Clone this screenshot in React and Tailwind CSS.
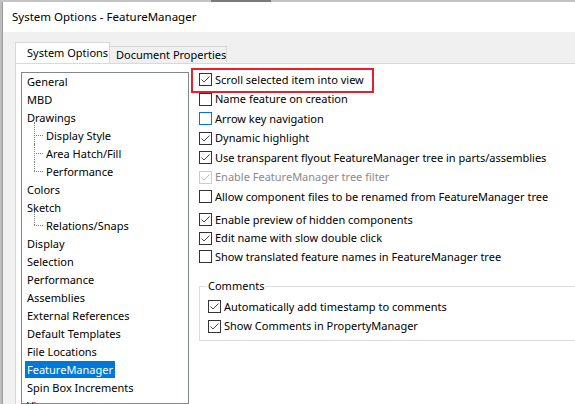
import React from "react";

const FONT = { fontFamily: '"Noto Sans", "Open Sans", Arial, sans-serif' };

function Check({ checked, disabled, focus }) {
  const border = disabled ? "border-[#cccccc]" : focus ? "border-[#0078d7]" : "border-[#333333]";
  return (
    <span className={`w-[13px] h-[13px] border ${border} bg-white flex items-center justify-center shrink-0`}>
      {checked && (
        <svg width="11" height="11" viewBox="0 0 11 11">
          <path d="M1.5 5.5 L4 8 L9.5 2.5" fill="none" stroke={disabled ? "#bcbcbc" : "#4a4a4a"} strokeWidth="1" />
        </svg>
      )}
    </span>
  );
}

function Row({ label, checked, disabled, focus, h = "h-[19.5px]" }) {
  return (
    <div className={`flex items-center ${h}`}>
      <Check checked={checked} disabled={disabled} focus={focus} />
      <span className={`ml-[3px] whitespace-nowrap ${disabled ? "text-[#8a8a8a]" : "text-black"}`}>{label}</span>
    </div>
  );
}

const tree = [
  { t: "General" },
  { t: "MBD" },
  { t: "Drawings" },
  { t: "Display Style", c: true, first: true },
  { t: "Area Hatch/Fill", c: true },
  { t: "Performance", c: true, last: true },
  { t: "Colors" },
  { t: "Sketch" },
  { t: "Relations/Snaps", c: true, first: true, last: true },
  { t: "Display" },
  { t: "Selection" },
  { t: "Performance" },
  { t: "Assemblies" },
  { t: "External References" },
  { t: "Default Templates" },
  { t: "File Locations" },
  { t: "FeatureManager", sel: true },
  { t: "Spin Box Increments" },
  { t: "View" },
];

function TreeItem({ item }) {
  if (item.c) {
    let style;
    if (item.first && item.last) style = { top: "-4px", height: "13px" };
    else if (item.first) style = { top: "-4px", height: "22px" };
    else if (item.last) style = { top: "0px", height: "9px" };
    else style = { top: "0px", height: "18px" };
    return (
      <div className="h-[18px] flex items-center relative">
        <div className="absolute left-[12px] w-0 border-l border-dotted border-[#808080]" style={style} />
        <div className="absolute left-[12px] top-[9px] w-[9px] border-t border-dotted border-[#808080]" />
        <span className="ml-[22px] px-[2px] leading-[17px] whitespace-nowrap">{item.t}</span>
      </div>
    );
  }
  return (
    <div className="h-[18px] flex items-center">
      <span className={`ml-[3px] px-[2px] leading-[17px] whitespace-nowrap ${item.sel ? "bg-[#0078d7] text-white" : "text-black"}`}>{item.t}</span>
    </div>
  );
}

export default function App() {
  return (
    <div className="w-[575px] h-[404px] overflow-hidden relative bg-[#f0f0f0] text-[11px]" style={FONT}>
      <div className="h-[2px] bg-[#c4c4c4] flex">
        <div className="ml-[211px] w-[60px] bg-[#7a7a7a]" />
      </div>
      <div className="flex h-[402px]">
        <div className="w-[3px] bg-[#bdbdbd] border-r border-[#9a9a9a]" />
        <div className="flex-1 flex flex-col min-w-0">
          <div className="h-[30px] bg-white flex items-center pl-[9px] text-[11.5px] text-black whitespace-nowrap">
            System Options - FeatureManager
          </div>
          <div className="flex-1 pl-[12px] pt-[11px] flex flex-col min-h-0">
            <div className="flex items-end h-[20px] relative z-10">
              <div className="w-[95px] h-[21px] bg-white border border-b-0 border-[#d9d9d9] pl-[11px] pt-[1px] text-black leading-[17px] whitespace-nowrap">
                System Options
              </div>
              <div className="w-[117px] h-[17px] bg-[#f0f0f0] border border-l-0 border-b-0 border-[#d9d9d9] pl-[6px] text-black leading-[15px] whitespace-nowrap">
                Document Properties
              </div>
            </div>
            <div className="flex-1 bg-white border-t border-l border-[#d9d9d9] flex min-h-0">
              <div className="ml-[5px] mt-[8px] w-[168px] border border-[#828790] bg-white shrink-0">
                <div className="-mt-[1px]">
                  {tree.map((item, i) => (
                    <TreeItem key={i} item={item} />
                  ))}
                </div>
              </div>
              <div className="ml-[10px] pt-[6px] flex flex-col relative">
                <div className="absolute left-[-8px] top-[4px] w-[183px] h-[25px] border-[2.5px] border-[#e8202a]" />
                <Row label="Scroll selected item into view" checked />
                <Row label="Name feature on creation" />
                <Row label="Arrow key navigation" focus />
                <Row label="Dynamic highlight" checked />
                <Row label="Use transparent flyout FeatureManager tree in parts/assemblies" checked />
                <Row label="Enable FeatureManager tree filter" checked disabled />
                <Row label="Allow component files to be renamed from FeatureManager tree" />
                <div className="h-[4px]" />
                <Row label="Enable preview of hidden components" checked h="h-[18.5px]" />
                <Row label="Edit name with slow double click" checked h="h-[18.5px]" />
                <Row label="Show translated feature names in FeatureManager tree" h="h-[18.5px]" />
                <div className="mt-[20px] w-[400px] h-[55px] border border-[#dcdcdc] relative pl-[8px] pt-[10px]">
                  <span className="absolute left-[7px] top-[-9px] bg-white px-[1px] leading-[16px]">Comments</span>
                  <Row label="Automatically add timestamp to comments" checked />
                  <Row label="Show Comments in PropertyManager" checked />
                </div>
              </div>
            </div>
          </div>
        </div>
      </div>
    </div>
  );
}
